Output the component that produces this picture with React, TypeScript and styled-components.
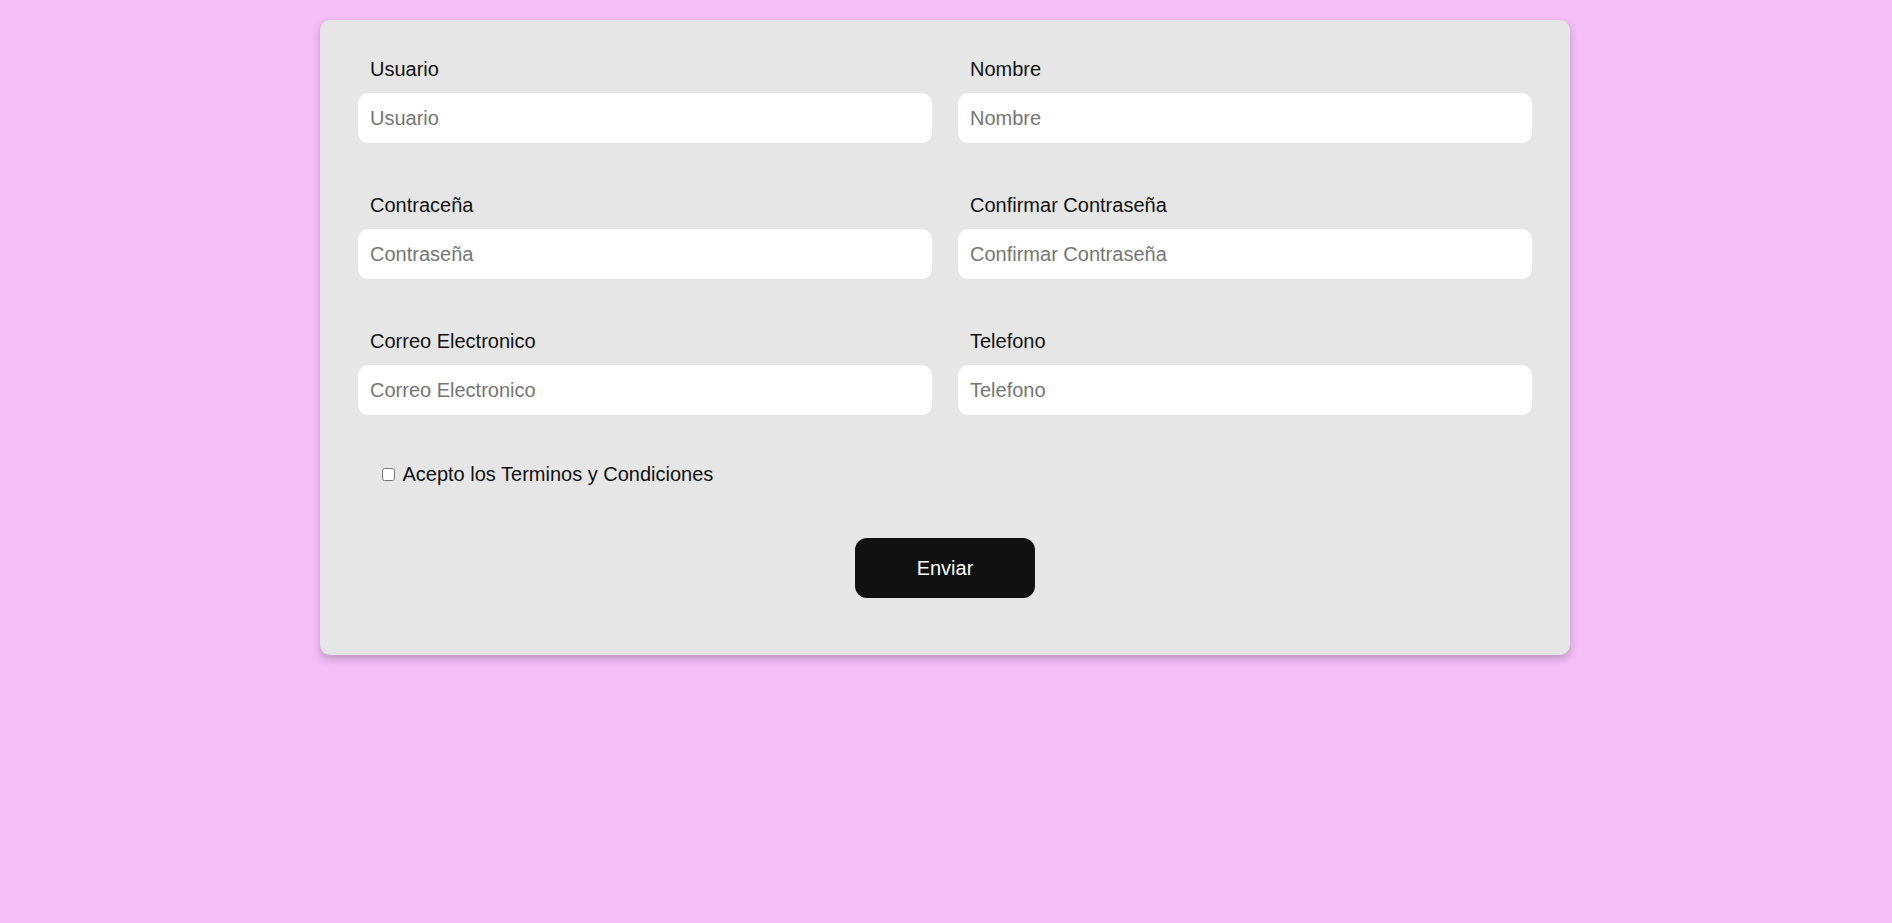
import styled, { createGlobalStyle } from 'styled-components';

const GlobalStyle = createGlobalStyle`
  html, body {
    margin: 0;
    padding: 0;
    background-color: #f5bef7;
    font-family: "Liberation Sans", Arial, sans-serif;
  }
`;

const fields = [
  { label: 'Usuario', placeholder: 'Usuario', type: 'text' },
  { label: 'Nombre', placeholder: 'Nombre', type: 'text' },
  { label: 'Contraceña', placeholder: 'Contraseña', type: 'password' },
  { label: 'Confirmar Contraseña', placeholder: 'Confirmar Contraseña', type: 'password' },
  { label: 'Correo Electronico', placeholder: 'Correo Electronico', type: 'email' },
  { label: 'Telefono', placeholder: 'Telefono', type: 'tel' },
];

export default function App() {
  return (
    <>
      <GlobalStyle />
      <Page>
        <FormCard onSubmit={(e) => e.preventDefault()}>
          <FieldGrid>
            {fields.map((f) => (
              <Field key={f.label}>
                <Label>{f.label}</Label>
                <Input type={f.type} placeholder={f.placeholder} />
              </Field>
            ))}
          </FieldGrid>
          <TermsRow>
            <input type="checkbox" /> Acepto los Terminos y Condiciones
          </TermsRow>
          <ButtonRow>
            <SubmitButton type="submit">Enviar</SubmitButton>
          </ButtonRow>
        </FormCard>
      </Page>
    </>
  );
}

const Page = styled.div`
  min-height: 923px;
  padding: 20px 2px 0 0;
  display: flex;
  justify-content: center;
  align-items: flex-start;
  box-sizing: border-box;
`;

const FormCard = styled.form`
  width: 1250px;
  box-sizing: border-box;
  padding: 38px 38px 57px 38px;
  background-color: #e6e6e6;
  border-radius: 10px;
  box-shadow: 0 4px 8px rgba(0, 0, 0, 0.22);
`;

const FieldGrid = styled.div`
  display: grid;
  grid-template-columns: 1fr 1fr;
  column-gap: 26px;
  row-gap: 51px;
`;

const Field = styled.div`
  display: flex;
  flex-direction: column;
  gap: 12px;
`;

const Label = styled.label`
  padding-left: 12px;
  font-size: 20px;
  line-height: 23px;
  color: #111;
`;

const Input = styled.input`
  height: 50px;
  box-sizing: border-box;
  padding: 0 12px;
  border: none;
  border-radius: 10px;
  background-color: #fff;
  font-family: "Liberation Sans", Arial, sans-serif;
  font-size: 20px;
  color: #111;
  outline: none;

  &::placeholder {
    color: #757575;
  }
`;

const TermsRow = styled.label`
  display: block;
  margin-top: 48px;
  padding-left: 20px;
  font-size: 20px;
  line-height: 23px;
  color: #111;
`;

const ButtonRow = styled.div`
  display: flex;
  justify-content: center;
  margin-top: 52px;
`;

const SubmitButton = styled.button`
  width: 180px;
  height: 60px;
  border: none;
  border-radius: 12px;
  background-color: #111;
  color: #fff;
  font-family: "Liberation Sans", Arial, sans-serif;
  font-size: 20px;
  cursor: pointer;
`;
